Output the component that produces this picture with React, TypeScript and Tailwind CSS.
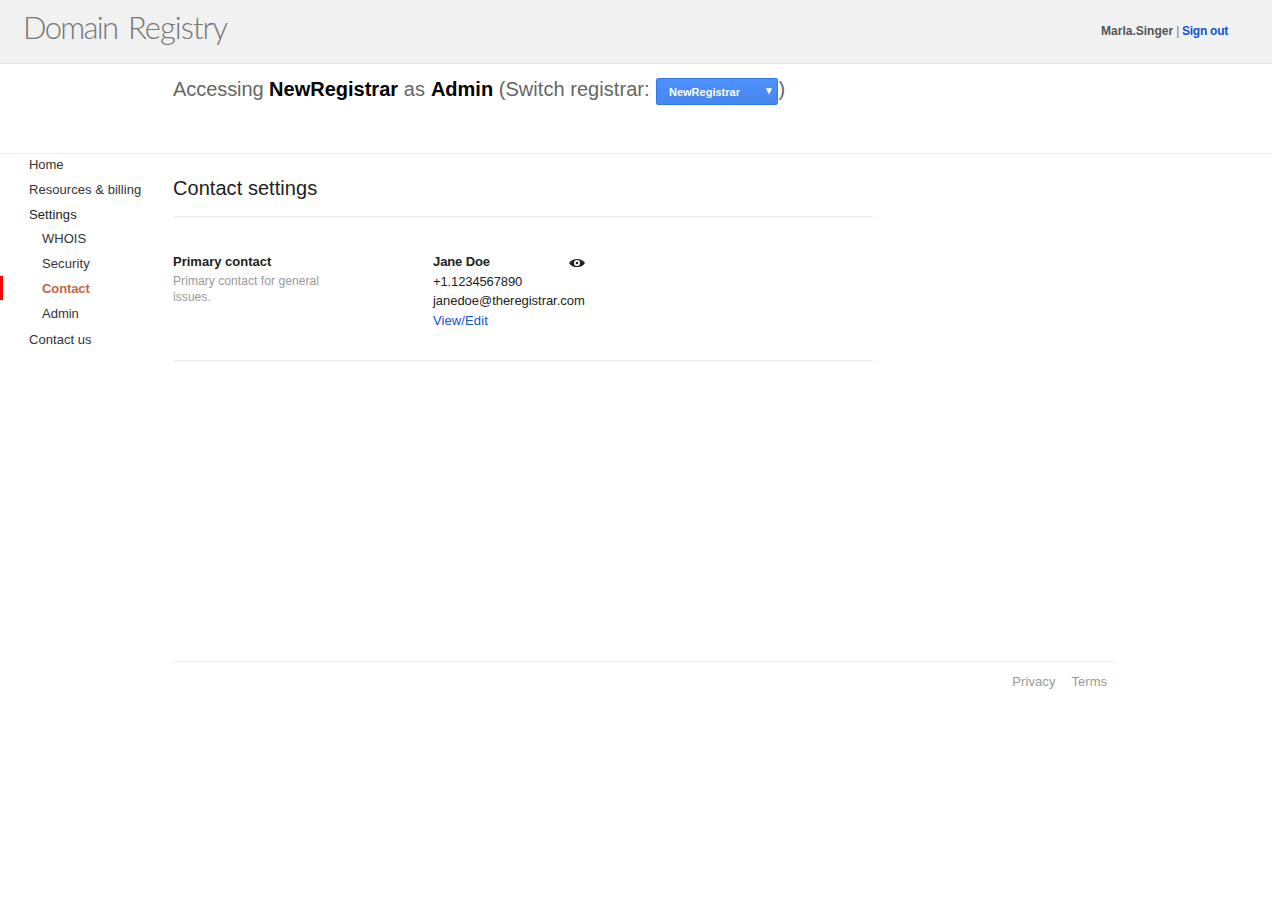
import React from "react";

const navItems = [
  { label: "Home", cls: "h-[25px] pl-[29px] tracking-[-0.1px]" },
  { label: "Resources & billing", cls: "h-[25px] pl-[29px] tracking-[0.05px]" },
  { label: "Settings", cls: "h-[24px] pl-[29px] text-[#222] tracking-[0.1px]" },
  { label: "WHOIS", cls: "h-[25px] pl-[42px]" },
  { label: "Security", cls: "h-[25px] pl-[42px] tracking-[0.1px]" },
  {
    label: "Contact",
    cls: "h-[25px] pl-[42px] font-bold text-[#c3654c] tracking-[-0.1px]",
    active: true,
  },
  { label: "Admin", cls: "h-[26px] pl-[42px]" },
  { label: "Contact us", cls: "h-[25px] pl-[29px] tracking-[0.05px]" },
];

function EyeIcon() {
  return (
    <svg className="mt-[6px] h-[10px] w-4" viewBox="0 0 16 10" fill="none">
      <path d="M0 5C2 2 4.800 .9 8 .9S14 2 16 5C14 8 11.200 9.100 8 9.100S2 8 0 5Z" fill="#222" />
      <circle cx="8" cy="5" r="2.200" stroke="#fff" strokeWidth="1.700" />
    </svg>
  );
}

function Header() {
  return (
    <header className="flex h-16 justify-between border-b border-[#e5e5e5] bg-[#f1f1f1] pr-11 pl-[23px]">
      <div className="flex pt-[7px] font-['Lato',sans-serif] text-[31px] leading-[40px] font-light text-[#777]">
        <span className="w-[105px] tracking-[-1.7px]">Domain</span>
        <span className="tracking-[-1px]">Registry</span>
      </div>
      <div className="pt-[23px] text-[12px] leading-4 text-[#777]">
        <b className="text-[#555]">Marla.Singer</b>
        <span className="tracking-[-0.3px]"> | </span>
        <b className="tracking-[-0.25px] text-[#15c]">Sign out</b>
      </div>
    </header>
  );
}

function RegistrarBar() {
  return (
    <div className="flex h-[90px] items-start border-b border-[#ebebeb] pl-[173px] text-[20px] leading-6 text-[#666]">
      <div className="w-[476px] pt-[13px] whitespace-pre">
        <span className="tracking-[-0.06px]">Accessing </span>
        <b className="text-black">NewRegistrar</b>
        <span className="tracking-[0.15px]"> as </span>
        <b className="text-black">Admin</b>
        <span className="tracking-[0.05px]"> (Switch registrar:</span>
      </div>
      <button className="mt-[14px] ml-[7px] flex h-[27px] w-[122px] shrink-0 justify-between rounded-[2px] border border-[#3079ed] bg-linear-to-b from-[#4d90fe] to-[#4787ed] pr-1 pl-3 text-[11px] leading-[26px] font-bold text-white">
        <span>NewRegistrar</span>
        <svg className="mt-[9px] h-[7px] w-2" viewBox="0 0 8 7">
          <path d="M.8 .3H7.200L4 6.500Z" fill="#fff" />
        </svg>
      </button>
      <span className="ml-[0.5px] pt-[13px]">)</span>
    </div>
  );
}

export default function App() {
  return (
    <div className="min-h-screen bg-white font-['Liberation_Sans',Arial,sans-serif] text-[13px] text-[#222]">
      <Header />
      <RegistrarBar />
      <div className="flex">
        <nav className="w-[173px] shrink-0 text-[#333]">
          {navItems.map((item) => (
            <div key={item.label} className={`flex ${item.cls}`}>
              {item.active && <span className="-mt-0.5 mr-[39px] -ml-[42px] h-6 w-[3px] bg-[#f00]" />}
              <span className="leading-[22px]">{item.label}</span>
            </div>
          ))}
        </nav>
        <div className="w-[942px]">
          <main className="h-[507px]">
            <h1 className="h-[63px] w-[700px] border-b border-[#ebebeb] pt-[22px] text-[20px] leading-6 tracking-[0.05px]">
              Contact settings
            </h1>
            <section className="flex h-36 w-[700px] border-b border-[#ebebeb] pt-[35px]">
              <div className="w-[260px]">
                <h2 className="leading-5 font-bold">Primary contact</h2>
                <p className="mt-px w-[160px] text-[12px] leading-4 tracking-[0.07px] text-[#999]">
                  Primary contact for general issues.
                </p>
              </div>
              <div className="w-[152px]">
                <div className="flex justify-between">
                  <b className="leading-5 tracking-[-0.1px]">Jane Doe</b>
                  <EyeIcon />
                </div>
                <div className="leading-[19px] tracking-[-0.12px]">+1.1234567890</div>
                <div className="leading-5 tracking-[-0.04px]">janedoe@theregistrar.com</div>
                <a className="block leading-5 tracking-[0.1px] text-[#15c]">View/Edit</a>
              </div>
            </section>
          </main>
          <footer className="flex justify-end gap-4 border-t border-[#ebebeb] pt-[10px] pr-2 leading-5 text-[#999]">
            <a className="tracking-[0.12px]">Privacy</a>
            <a>Terms</a>
          </footer>
        </div>
      </div>
    </div>
  );
}
